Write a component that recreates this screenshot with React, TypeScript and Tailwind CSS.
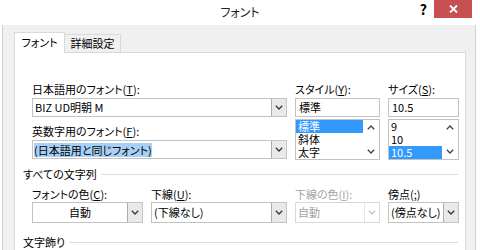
import React from "react";

const font = "font-['Noto_Sans_CJK_JP',sans-serif] [font-feature-settings:'palt']";

function Down({ className = "" }: { className?: string }) {
  return (
    <svg width="8" height="5" viewBox="0 0 8 5" className={className}>
      <path d="M0.8 0.8 L4 4 L7.2 0.8" fill="none" stroke="currentColor" strokeWidth="1.3" />
    </svg>
  );
}

function Up({ className = "" }: { className?: string }) {
  return (
    <svg width="8" height="5" viewBox="0 0 8 5" className={className}>
      <path d="M0.8 4.2 L4 1 L7.2 4.2" fill="none" stroke="currentColor" strokeWidth="1.3" />
    </svg>
  );
}

type ComboProps = {
  children?: React.ReactNode;
  tall?: boolean;
  center?: boolean;
  disabled?: boolean;
};

function Combo({ children, tall, center, disabled }: ComboProps) {
  const box = tall ? "h-[21px]" : "h-[19px]";
  const border = disabled ? "border-[#d9d9d9]" : "border-[#c3c3c3]";
  return (
    <div className={`flex ${box} border ${border} bg-white`}>
      <div
        className={`flex-1 min-w-0 flex items-center px-[2px] whitespace-nowrap ${center ? "justify-center" : ""} ${disabled ? "text-[#a3a3a3]" : "text-black"}`}
      >
        {children}
      </div>
      {disabled ? (
        <div className="w-[15px] border-l border-[#e6e6e6] flex items-center justify-center text-[#c4c4c4]">
          <Down />
        </div>
      ) : (
        <div className="w-[15px] bg-[#e9e9e9] border-l border-[#acacac] flex items-center justify-center text-[#333]">
          <Down />
        </div>
      )}
    </div>
  );
}

function Input({ children }: { children: React.ReactNode }) {
  return (
    <div className="h-[19px] border border-[#c3c3c3] bg-white flex items-center px-[3px] whitespace-nowrap">
      {children}
    </div>
  );
}

function ListBox({ items, selected }: { items: string[]; selected: number }) {
  return (
    <div className="h-[41px] border border-[#c3c3c3] bg-white flex">
      <div className="flex-1 flex flex-col">
        {items.map((it, i) =>
          i === selected ? (
            <div key={it} className="h-[13px] leading-[13px] px-[2px] bg-[#3399ff] text-white">
              {it}
            </div>
          ) : (
            <div key={it} className="h-[13px] leading-[13px] px-[2px] text-black">
              {it}
            </div>
          )
        )}
      </div>
      <div className="w-[16px] flex flex-col justify-between items-center py-[5px] text-[#404040]">
        <Up />
        <Down />
      </div>
    </div>
  );
}

function Heading({ children }: { children: React.ReactNode }) {
  return (
    <div className="flex items-center h-[17px] leading-[17px] pr-[7px]">
      <span className="text-black">{children}</span>
      <div className="flex-1 h-px bg-[#dcdcdc] ml-[4px]" />
    </div>
  );
}

export default function App() {
  return (
    <div className={`w-[480px] h-[250px] bg-white overflow-hidden flex flex-col text-[11px] ${font}`}>
      {/* title bar */}
      <div className="h-[25px] shrink-0 grid grid-cols-[1fr_auto_1fr]">
        <div />
        <div className="flex items-center text-[12px] text-[#222] pb-[1px]">フォント</div>
        <div className="flex justify-end items-start">
          <span className="mt-[1px] mr-[7px] text-[14px] leading-[16px] font-bold text-black">?</span>
          <div className="w-[38px] h-[18px] bg-[#c75050] flex items-center justify-center mr-[8px]">
            <svg width="9" height="8" viewBox="0 0 9 8">
              <path d="M1 0.5 L8 7.5 M8 0.5 L1 7.5" stroke="white" strokeWidth="1.8" />
            </svg>
          </div>
        </div>
      </div>

      {/* body */}
      <div className="flex-1 flex flex-col bg-[#f0f0f0] ml-[2px] mr-[4px] border-l border-r border-[#d0d0d0] pl-[11px] pr-[9px] pt-[7px]">
        <div className="flex items-end -mb-px relative">
          <div className="h-[21px] w-[51px] bg-white border border-b-0 border-[#d9d9d9] flex items-center justify-center pb-[1px]">
            フォント
          </div>
          <div className="h-[19px] w-[56px] bg-[#f0f0f0] border border-l-0 border-[#d9d9d9] flex items-center justify-center">
            詳細設定
          </div>
        </div>

        <div className="flex-1 bg-white border border-[#d9d9d9] pl-[8px] pt-[28px]">
          <div className="pl-[9px] grid grid-cols-[255px_85px_71px] gap-x-[8px]">
            <div className="flex flex-col">
              <div className="h-[17px] leading-[17px]">
                日本語用のフォント(<u>T</u>):
              </div>
              <Combo>BIZ UD明朝 M</Combo>
              <div className="h-[17px] leading-[17px] mt-[6px]">
                英数字用のフォント(<u>F</u>):
              </div>
              <Combo>
                <span className="-ml-[1px] bg-[#a8d0f7] leading-[14px]">(日本語用と同じフォント)</span>
              </Combo>
            </div>
            <div className="flex flex-col">
              <div className="h-[17px] leading-[17px]">
                スタイル(<u>Y</u>):
              </div>
              <Input>標準</Input>
              <div className="mt-[2px]">
                <ListBox items={["標準", "斜体", "太字"]} selected={0} />
              </div>
            </div>
            <div className="flex flex-col">
              <div className="h-[17px] leading-[17px]">
                サイズ(<u>S</u>):
              </div>
              <Input>10.5</Input>
              <div className="mt-[2px]">
                <ListBox items={["9", "10", "10.5"]} selected={2} />
              </div>
            </div>
          </div>

          <div className="mt-[6px]">
            <Heading>すべての文字列</Heading>
          </div>

          <div className="pl-[9px] mt-[4px] grid grid-cols-[111px_136px_85px_71px] gap-x-[8px]">
            <div className="flex flex-col">
              <div className="h-[15px] leading-[15px]">
                フォントの色(<u>C</u>):
              </div>
              <Combo tall center>
                自動
              </Combo>
            </div>
            <div className="flex flex-col">
              <div className="h-[15px] leading-[15px]">
                下線(<u>U</u>):
              </div>
              <Combo tall>(下線なし)</Combo>
            </div>
            <div className="flex flex-col">
              <div className="h-[15px] leading-[15px] text-[#a3a3a3]">
                下線の色(<u>I</u>):
              </div>
              <Combo tall disabled>
                自動
              </Combo>
            </div>
            <div className="flex flex-col">
              <div className="h-[15px] leading-[15px]">
                傍点(<u>;</u>)
              </div>
              <Combo tall>(傍点なし)</Combo>
            </div>
          </div>

          <div className="mt-[11px]">
            <Heading>文字飾り</Heading>
          </div>
        </div>
      </div>
    </div>
  );
}
